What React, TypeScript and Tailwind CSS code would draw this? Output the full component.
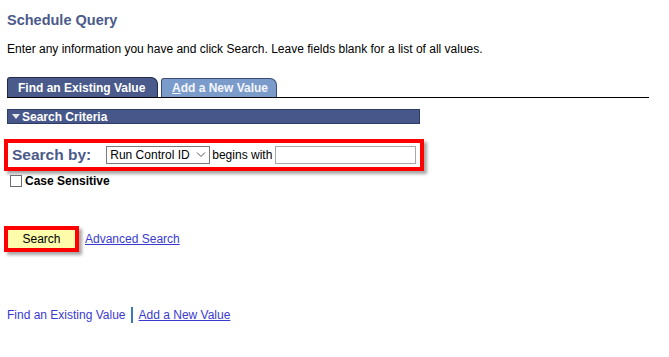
import React from "react";

export default function App() {
  return (
    <div className="w-[669px] h-[357px] bg-white overflow-hidden font-['Liberation_Sans',Arial,sans-serif] text-black">
      <div className="pl-[7px] pt-[12px] text-[14.5px] leading-[17px] font-bold text-[#4b5a8a]">
        Schedule Query
      </div>
      <div className="pl-[7px] mt-[13px] text-[12px] leading-[14px]">
        Enter any information you have and click Search. Leave fields blank for a list of all values.
      </div>

      {/* tabs */}
      <div className="ml-[7px] mt-[21px] w-[642px] h-[21px] flex items-end border-b-[1.5px] border-black">
        <div className="w-[151px] h-[20px] bg-[#4a5a8b] border border-b-0 border-[#222b4a] rounded-tr-[7px] rounded-tl-[3px] flex items-center pl-[10px] text-[12px] font-bold text-white">
          Find an Existing Value
        </div>
        <div className="ml-[3px] w-[116px] h-[19px] bg-[#7b9ccb] border border-b-0 border-[#3d4a75] rounded-tr-[7px] rounded-tl-[3px] flex items-center pl-[10px] text-[12px] font-bold text-[#f4f6fb]">
          <span><span className="underline">A</span>dd a New Value</span>
        </div>
      </div>

      {/* search criteria bar */}
      <div className="ml-[7px] mt-[11px] w-[413px] h-[15px] bg-[#48578a] border border-[#2f3b68] flex items-center pl-[4px] text-[12px] font-bold text-white">
        <svg width="8" height="6" viewBox="0 0 8 6" className="mr-[2px]">
          <path d="M0 0 H8 L4 5 Z" fill="#e8e8e8" />
        </svg>
        Search Criteria
      </div>

      {/* search by */}
      <div className="ml-[4px] mt-[15px] w-[420px] h-[32px] border-4 border-[#ff0000] shadow-[3px_3px_3px_rgba(0,0,0,0.35)] flex items-center pl-[4px]">
        <span className="text-[15.5px] font-bold text-[#4b5a8a] leading-none">Search by:</span>
        <div className="ml-[15px] w-[104px] h-[18px] border border-[#7a7a7a] bg-white flex items-center justify-between pl-[3px] pr-[3px] text-[12px]">
          <span>Run Control ID</span>
          <svg width="10" height="6" viewBox="0 0 10 6">
            <path d="M1 0.5 L5 4.5 L9 0.5" fill="none" stroke="#555" strokeWidth="1" />
          </svg>
        </div>
        <span className="ml-[2px] text-[12px]">begins with</span>
        <div className="ml-[3px] w-[141px] h-[18px] border border-[#a8a8a8] bg-white" />
      </div>

      {/* case sensitive */}
      <div className="ml-[10px] mt-[3px] h-[13px] flex items-center">
        <div className="w-[12px] h-[12px] border border-[#6d6d6d] bg-white" />
        <span className="ml-[3px] text-[12px] font-bold">Case Sensitive</span>
      </div>

      {/* search button */}
      <div className="ml-[4px] mt-[39px] flex items-center">
        <div className="w-[75px] h-[26px] border-4 border-[#ff0000] shadow-[3px_3px_3px_rgba(0,0,0,0.35)] bg-[#fcfcaa] flex items-center justify-center text-[12px]">
          Search
        </div>
        <a href="#" className="ml-[6px] text-[12px] text-[#3a3ad0] underline">
          Advanced Search
        </a>
      </div>

      {/* bottom links */}
      <div className="ml-[7px] mt-[55px] flex items-center text-[12px] leading-[14px] text-[#3a3ad0]">
        <span>Find an Existing Value</span>
        <span className="ml-[5px] mr-[6px] w-[2px] h-[16px] bg-[#3b78b8]" />
        <a href="#" className="underline">Add a New Value</a>
      </div>
    </div>
  );
}
